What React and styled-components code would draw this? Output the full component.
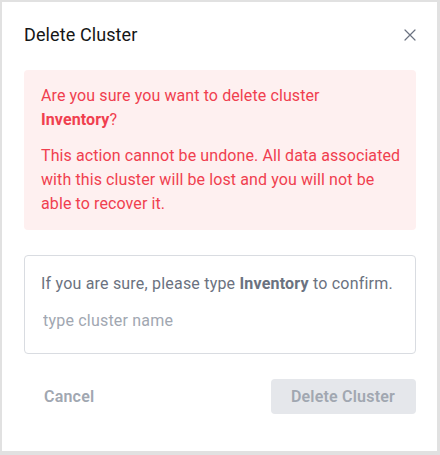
import React from "react";
import styled, { createGlobalStyle } from "styled-components";

const GlobalStyle = createGlobalStyle`
  html, body {
    margin: 0;
    padding: 0;
    background: #e1e1e1;
  }
  body {
    font-family: Roboto, "Liberation Sans", sans-serif;
  }
`;

const Frame = styled.div`
  width: 440px;
  height: 455px;
  box-sizing: border-box;
  padding: 2px 3px 4px 2px;
`;

const Dialog = styled.div`
  width: 100%;
  height: 100%;
  box-sizing: border-box;
  background: #fff;
  padding: 0 21px 0 22px;
`;

const Header = styled.div`
  height: 68px;
  display: flex;
  align-items: flex-start;
  justify-content: space-between;
  padding-top: 18px;
  box-sizing: border-box;
`;

const Title = styled.h2`
  margin: 0;
  font-size: 18px;
  line-height: 30px;
  font-weight: 400;
  letter-spacing: 0.1px;
  color: #161616;
`;

const CloseButton = styled.button`
  border: none;
  background: none;
  padding: 0;
  width: 20px;
  height: 20px;
  margin-top: 5px;
  margin-right: -4px;
  display: flex;
  align-items: center;
  justify-content: center;
  cursor: pointer;
`;

const Alert = styled.div`
  background: #fef0f0;
  border-radius: 4px;
  padding: 14px 13px 14px 17px;
  color: #f03f4f;
  font-size: 16px;
  line-height: 24px;
  letter-spacing: 0.1px;
`;

const AlertText = styled.p`
  margin: 0;
  & + & {
    margin-top: 12px;
  }
`;

const ConfirmBox = styled.div`
  margin-top: 25px;
  border: 1px solid #d9dce1;
  border-radius: 4px;
  padding: 16px 14px 21px 16px;
`;

const ConfirmLabel = styled.label`
  display: block;
  font-size: 16px;
  line-height: 24px;
  letter-spacing: 0.2px;
  color: #6b7280;
`;

const NameInput = styled.input`
  display: block;
  margin-top: 12px;
  width: 100%;
  box-sizing: border-box;
  border: none;
  outline: none;
  padding: 0 2px;
  height: 24px;
  font-family: inherit;
  font-size: 16px;
  letter-spacing: 0.2px;
  color: #374151;
  caret-color: #111;
  &::placeholder {
    color: #a1a7b1;
  }
`;

const Footer = styled.div`
  margin-top: 25px;
  display: flex;
  justify-content: space-between;
  align-items: center;
`;

const Button = styled.button`
  font-family: inherit;
  font-size: 16px;
  font-weight: 600;
  letter-spacing: 0.2px;
  height: 35px;
  padding: 0 21px 0 20px;
  border: none;
  border-radius: 4px;
  color: #a1a7b1;
  background: ${(p) => (p.$filled ? "#e5e7eb" : "transparent")};
  cursor: ${(p) => (p.disabled ? "not-allowed" : "pointer")};
`;

const CloseIcon = () => (
  <svg width="12" height="12" viewBox="0 0 12 12" fill="none">
    <path
      d="M1 1L11 11M11 1L1 11"
      stroke="#6b7280"
      strokeWidth="1.2"
      strokeLinecap="round"
    />
  </svg>
);

export default function App() {
  return (
    <>
      <GlobalStyle />
      <Frame>
        <Dialog>
          <Header>
            <Title>Delete Cluster</Title>
            <CloseButton aria-label="Close">
              <CloseIcon />
            </CloseButton>
          </Header>
          <Alert>
            <AlertText>
              Are you sure you want to delete cluster
              <br />
              <strong>Inventory</strong>?
            </AlertText>
            <AlertText>
              This action cannot be undone. All data associated with this
              cluster will be lost and you will not be able to recover it.
            </AlertText>
          </Alert>
          <ConfirmBox>
            <ConfirmLabel htmlFor="cluster-name">
              If you are sure, please type <strong>Inventory</strong> to confirm.
            </ConfirmLabel>
            <NameInput
              id="cluster-name"
              placeholder="type cluster name"
              autoFocus
            />
          </ConfirmBox>
          <Footer>
            <Button>Cancel</Button>
            <Button $filled disabled>
              Delete Cluster
            </Button>
          </Footer>
        </Dialog>
      </Frame>
    </>
  );
}
